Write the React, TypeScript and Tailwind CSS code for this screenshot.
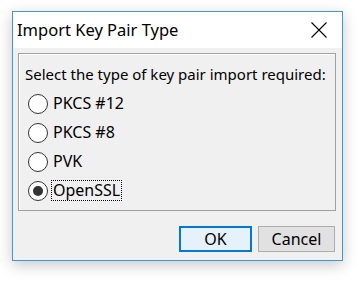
import React, { useState } from 'react';

const options = ['PKCS #12', 'PKCS #8', 'PVK', 'OpenSSL'];

function Radio({ checked }: { checked: boolean }) {
  return (
    <span className="flex h-[20px] w-[20px] shrink-0 items-center justify-center rounded-full border border-[#333333] bg-white">
      {checked && <span className="h-[10px] w-[10px] rounded-full bg-[#333333]" />}
    </span>
  );
}

export default function App() {
  const [selected, setSelected] = useState(3);

  return (
    <div className="h-[289px] w-[364px] bg-white pl-[12px] pt-[11px] text-black [font-family:'Noto_Sans',sans-serif]">
      <div className="flex h-[250px] w-[331px] flex-col border border-[#3b99d6] bg-[#f0f0f0] shadow-[0_4px_14px_rgba(0,0,0,0.22)]">
        {/* Title bar */}
        <div className="flex h-[36px] items-center justify-between bg-white pl-[4px] pr-[15px]">
          <span className="text-[16.5px] leading-none">Import Key Pair Type</span>
          <svg width="16" height="16" viewBox="0 0 16 16" className="text-black">
            <path d="M0.5 0.5 L15.5 15.5 M15.5 0.5 L0.5 15.5" stroke="currentColor" strokeWidth="1.1" />
          </svg>
        </div>

        {/* Body */}
        <div className="flex flex-1 flex-col pl-[5px] pr-[6px] pt-[5px]">
          <div className="flex h-[158px] flex-col border border-[#a0a0a0] pl-[6px] pt-[10px] shadow-[inset_1px_1px_0_#ffffff]">
            <div className="text-[15px] leading-[20px]">Select the type of key pair import required:</div>
            <div className="mt-[5px] flex flex-col pl-[3px]">
              {options.map((opt, i) => (
                <button
                  key={opt}
                  onClick={() => setSelected(i)}
                  className="flex h-[29px] items-center gap-[4px] text-left"
                >
                  <Radio checked={selected === i} />
                  <span
                    className={
                      'px-px text-[16px] leading-[19px] ' +
                      (selected === i ? 'outline-1 outline-dotted outline-black' : '')
                    }
                  >
                    {opt}
                  </span>
                </button>
              ))}
            </div>
          </div>

          <div className="mt-[15px] flex justify-end gap-[6px] pr-[1px]">
            <button className="h-[26px] w-[73px] border-2 border-[#0078d7] bg-[#e5f1fb] text-[16px] leading-none">
              OK
            </button>
            <button className="h-[26px] w-[77px] border border-[#adadad] bg-[#e1e1e1] text-[16px] leading-none">
              Cancel
            </button>
          </div>
        </div>
      </div>
    </div>
  );
}
